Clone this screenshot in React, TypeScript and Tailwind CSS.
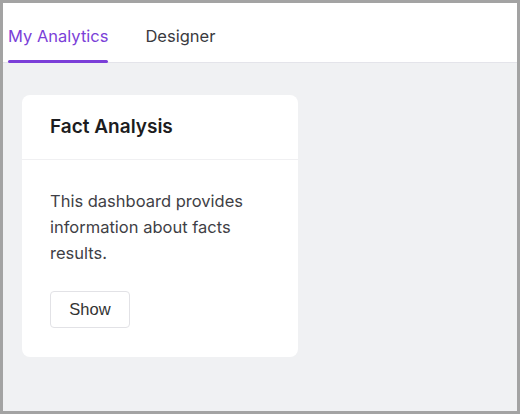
const tabs = [
  { label: "My Analytics", active: true },
  { label: "Designer", active: false },
];

const App = () => {
  return (
    <div
      className="w-[520px] h-[414px] border-[3px] border-[#a3a3a3] bg-[#f0f1f3] flex flex-col overflow-hidden"
      style={{ fontFamily: "Inter, 'Noto Sans', sans-serif" }}
    >
      {/* Tabs */}
      <div className="h-[60px] bg-white border-b border-[#e4e4ea] flex gap-[37px] pl-[5px] shrink-0">
        {tabs.map((tab) => (
          <div key={tab.label} className="flex flex-col h-full">
            <span
              className={
                tab.active
                  ? "pt-[21px] text-[16.5px] leading-6 text-[#7b3fd8]"
                  : "pt-[21px] text-[16.5px] leading-6 text-[#3a3a40]"
              }
            >
              {tab.label}
            </span>
            {tab.active && (
              <div className="mt-auto -mb-px h-[3px] rounded-full bg-[#7b3fd8]" />
            )}
          </div>
        ))}
      </div>

      {/* Card */}
      <div className="pl-[19px] pt-[32px]">
        <div className="w-[276px] bg-white rounded-lg">
          <div className="h-[65px] border-b border-[#f0f0f2] flex items-center px-[28px]">
            <h2 className="text-[19px] font-semibold text-[#1c1c20]">
              Fact Analysis
            </h2>
          </div>
          <div className="px-[28px] pt-[28px] pb-[29px]">
            <p className="text-[16.5px] leading-[26px] text-[#3f3f46]">
              This dashboard provides information about facts results.
            </p>
            <button
              className="mt-[25px] w-[80px] h-[37px] border border-[#e2e2e6] rounded text-[16.5px] text-[#333] bg-white"
              style={{ fontFamily: "'Liberation Sans', Arial, sans-serif" }}
            >
              Show
            </button>
          </div>
        </div>
      </div>
    </div>
  );
};

export default App;
